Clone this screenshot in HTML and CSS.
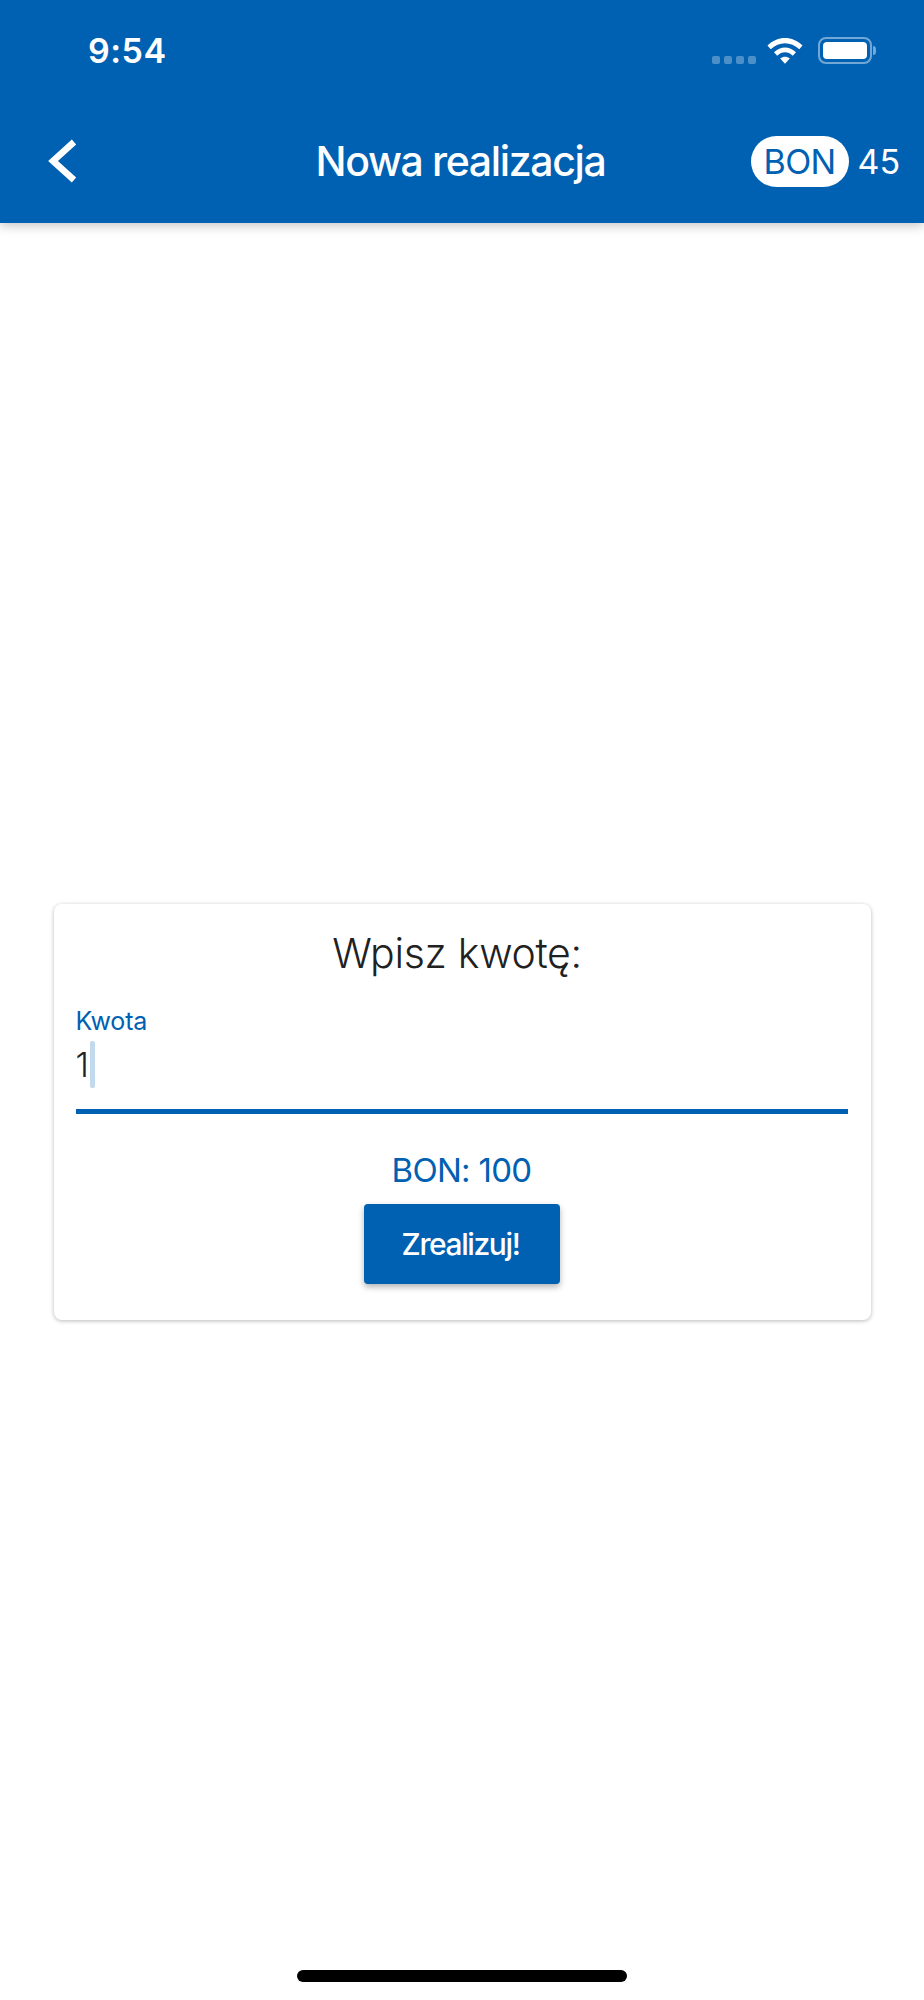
FILE: index.html
```html
<!DOCTYPE html>
<html lang="pl">
<head>
    <meta charset="UTF-8">
    <meta name="viewport" content="width=device-width, initial-scale=1.0">
    <title>Nowa realizacja</title>
    <link rel="stylesheet" href="styles.css">
</head>
<body>

    <!-- Header -->
    <header class="app-header">
        <div class="status-bar">
            <span class="status-time">9:54</span>
            <div class="status-icons">
                <div class="signal-dots">
                    <span></span><span></span><span></span><span></span>
                </div>
                <svg class="wifi-icon" width="36" height="27" viewBox="0 0 36 27">
                    <path d="M0.5 8.6 C10.5 -1.4 25.5 -1.4 35.5 8.6 L32.3 12.2 C24 4.2 12 4.2 3.7 12.2 Z" fill="#fff"/>
                    <path d="M7 15.2 C13.5 8.8 22.5 8.8 29 15.2 L25.8 18.7 C21 14.2 15 14.2 10.2 18.7 Z" fill="#fff"/>
                    <path d="M13.2 21.6 C16 19.2 20 19.2 22.8 21.6 L18 26.8 Z" fill="#fff"/>
                </svg>
                <div class="battery">
                    <div class="battery-body"><div class="battery-level"></div></div>
                    <div class="battery-tip"></div>
                </div>
            </div>
        </div>
        <div class="nav-bar">
            <button class="back-button" aria-label="Wstecz">
                <svg width="30" height="46" viewBox="0 0 30 46">
                    <path d="M26 4 L5 23 L26 42" fill="none" stroke="#fff" stroke-width="6.5"/>
                </svg>
            </button>
            <h1 class="nav-title">Nowa realizacja</h1>
            <div class="balance">
                <span class="bon-pill">BON</span>
                <span class="balance-value">45</span>
            </div>
        </div>
    </header>

    <!-- Form -->
    <main class="content">
        <section class="card">
            <h2 class="card-title">Wpisz kwotę:</h2>
            <div class="field">
                <label class="field-label">Kwota</label>
                <div class="field-input">
                    <span class="field-value">1</span>
                    <span class="field-cursor"></span>
                </div>
            </div>
            <p class="bon-amount">BON: 100</p>
            <button class="submit-button">Zrealizuj!</button>
        </section>
    </main>

    <div class="home-area">
        <div class="home-bar"></div>
    </div>

</body>
</html>
```

FILE: styles.css
```css
body, html {
    margin: 0;
    padding: 0;
    height: 100%;
    font-family: Inter, 'Liberation Sans', sans-serif;
    background: #fff;
    overflow: hidden;
}

body {
    display: flex;
    flex-direction: column;
}

/* Header */
.app-header {
    height: 223px;
    background-color: #0060b2;
    color: #fff;
    box-shadow: 0 3px 10px rgba(0, 0, 0, 0.22);
    position: relative;
    flex-shrink: 0;
}

.status-bar {
    display: flex;
    justify-content: space-between;
    align-items: center;
    height: 27px;
    padding: 37px 48px 0 88px;
}

.status-time {
    font-size: 34px;
    font-weight: 600;
    letter-spacing: 0.5px;
}

.status-icons {
    display: flex;
    align-items: center;
}

.signal-dots {
    display: flex;
    gap: 4px;
    align-self: flex-end;
    margin-right: 11px;
}

.signal-dots span {
    width: 8px;
    height: 8px;
    border-radius: 2px;
    background: rgba(255, 255, 255, 0.3);
}

.wifi-icon {
    display: block;
    margin-right: 15px;
}

.battery {
    display: flex;
    align-items: center;
}

.battery-body {
    box-sizing: border-box;
    width: 54px;
    height: 27px;
    padding: 3px;
    border: 2px solid rgba(255, 255, 255, 0.45);
    border-radius: 8px;
}

.battery-level {
    height: 100%;
    background: #fff;
    border-radius: 4px;
}

.battery-tip {
    width: 3px;
    height: 9px;
    margin-left: 1px;
    background: rgba(255, 255, 255, 0.45);
    border-radius: 0 3px 3px 0;
}

.nav-bar {
    display: grid;
    grid-template-columns: 1fr auto 1fr;
    align-items: center;
    height: 54px;
    margin-top: 70px;
    padding: 0 24px;
}

.back-button {
    display: block;
    width: 30px;
    height: 46px;
    margin-left: 24px;
    padding: 0;
    border: none;
    background: none;
}

.nav-title {
    margin: 0 3px 0 0;
    font-size: 41px;
    font-weight: 500;
    letter-spacing: -1.35px;
}

.balance {
    display: flex;
    align-items: center;
    justify-content: flex-end;
    gap: 9px;
}

.bon-pill {
    display: flex;
    align-items: center;
    justify-content: center;
    width: 98px;
    height: 51px;
    background: #fff;
    color: #0060b2;
    border-radius: 26px;
    font-size: 34px;
    letter-spacing: -0.6px;
}

.balance-value {
    font-size: 34px;
    letter-spacing: -0.1px;
}

/* Form */
.content {
    flex: 1;
    display: flex;
    align-items: center;
    justify-content: center;
}

.card {
    box-sizing: border-box;
    width: 817px;
    height: 416px;
    padding: 24px 23px 0 22px;
    background: #fff;
    border-radius: 8px;
    box-shadow: 0 1px 4px rgba(0, 0, 0, 0.28);
    display: flex;
    flex-direction: column;
    align-items: center;
}

.card-title {
    margin: 0 9px 0 0;
    font-size: 41px;
    line-height: 50px;
    font-weight: 300;
    color: #212121;
    letter-spacing: -0.3px;
}

.field {
    align-self: stretch;
    margin-top: 28px;
}

.field-label {
    display: block;
    font-size: 25px;
    line-height: 30px;
    color: #0060b2;
    letter-spacing: -0.2px;
}

.field-input {
    display: flex;
    align-items: center;
    height: 50px;
    margin-top: 4px;
    padding-bottom: 19px;
    border-bottom: 5px solid #0060b2;
}

.field-value {
    font-size: 34px;
    font-weight: 300;
    color: #212121;
    line-height: 40px;
}

.field-cursor {
    width: 5px;
    height: 47px;
    margin-left: 1px;
    background: #c3daee;
    border-radius: 2px;
}

.bon-amount {
    margin: 35px 0 0;
    font-size: 33px;
    line-height: 42px;
    color: #0060b2;
    letter-spacing: -0.7px;
}

.submit-button {
    width: 196px;
    height: 80px;
    margin-top: 13px;
    padding: 0 2px 0 0;
    border: none;
    border-radius: 4px;
    background-color: #0060b2;
    color: #fff;
    font-family: inherit;
    font-size: 30px;
    font-weight: 500;
    letter-spacing: -1.4px;
    box-shadow: 0 3px 6px rgba(0, 0, 0, 0.3);
}

/* Home indicator */
.home-area {
    position: absolute;
    left: 0;
    right: 0;
    bottom: 18px;
    display: flex;
    justify-content: center;
}

.home-bar {
    width: 330px;
    height: 12px;
    background: #000;
    border-radius: 6px;
}
```
